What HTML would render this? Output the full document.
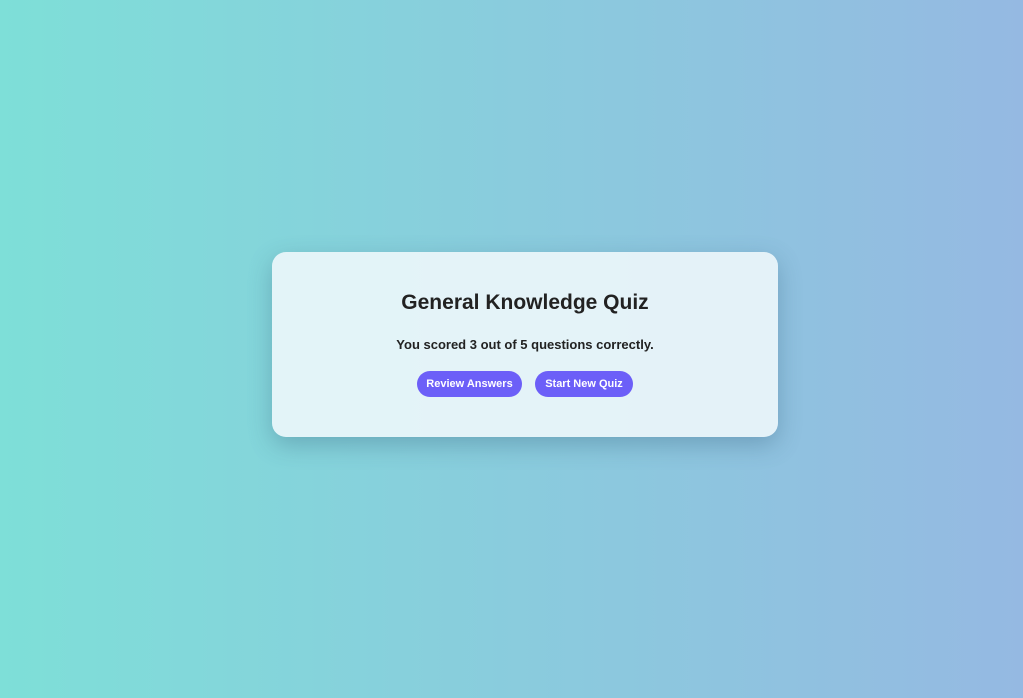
<!DOCTYPE html>
<html><head><style>
html,body{margin:0;height:698px;width:1023px;overflow:hidden}
body{background:linear-gradient(90deg,#7edfd8,#95b9e2);font-family:"Liberation Sans",sans-serif;position:relative}
.card{position:absolute;left:272px;top:252px;width:506px;height:185px;background:rgba(240,248,252,.88);border-radius:14px;box-shadow:0 8px 24px rgba(40,80,110,.3);text-align:center;color:#222}
h1{margin:0;position:absolute;top:39px;left:0;right:0;font-size:21px;font-weight:bold}
p{margin:0;position:absolute;top:85px;left:0;right:0;font-size:13px;font-weight:bold}
.b{position:absolute;top:119px;height:26px;line-height:26px;background:#6c5ff8;color:#fff;border-radius:13px;font-size:11px;font-weight:bold}
</style></head><body>
<div class="card">
<h1>General Knowledge Quiz</h1>
<p>You scored 3 out of 5 questions correctly.</p>
<div class="b" style="left:145px;width:105px">Review Answers</div>
<div class="b" style="left:263px;width:98px">Start New Quiz</div>
</div>
</body></html>
